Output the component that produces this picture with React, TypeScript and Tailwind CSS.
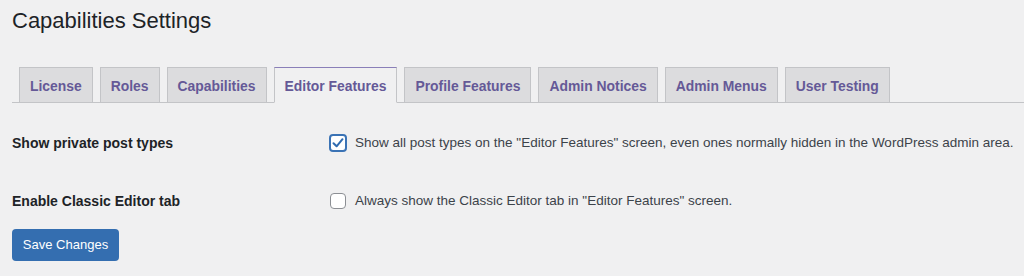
import React from "react";

const tabs = [
  "License",
  "Roles",
  "Capabilities",
  "Editor Features",
  "Profile Features",
  "Admin Notices",
  "Admin Menus",
  "User Testing",
];

function Checkbox({ checked }: { checked: boolean }) {
  return checked ? (
    <span className="flex h-[18px] w-[18px] shrink-0 items-center justify-center rounded-[4px] border-2 border-[#3b73b5] bg-white">
      <svg width="14" height="14" viewBox="0 0 14 14" fill="none">
        <path d="M2.5 7.2 L5.6 10.3 L11.5 3.2" stroke="#2f6bb0" strokeWidth="2" strokeLinecap="round" strokeLinejoin="round" />
      </svg>
    </span>
  ) : (
    <span className="block h-[16px] w-[16px] shrink-0 rounded-[4px] border border-[#8c8f94] bg-white" />
  );
}

export default function App() {
  return (
    <div
      className="h-[276px] w-[1024px] overflow-hidden bg-[#f0f0f1] pl-[12px]"
      style={{ fontFamily: '"Liberation Sans", Arial, sans-serif' }}
    >
      <h1 className="pt-[6px] text-[22px] leading-[30px] font-normal text-[#1d2327]">
        Capabilities Settings
      </h1>
      <div className="mt-[31px] flex items-end gap-[7px] border-b border-[#c3c4c7] pl-[7px]">
        {tabs.map((t) => {
          const active = t === "Editor Features";
          return (
            <div
              key={t}
              className={
                active
                  ? "-mb-px border border-[#c3c4c7] border-t-[#8a7fb8] border-b-[#f0f0f1] bg-[#f0f0f1] px-[10px] pt-[6px] pb-[4px] text-[13.9px] leading-[24px] font-bold text-[#655997]"
                  : "border border-b-0 border-[#c3c4c7] bg-[#dcdcde] px-[10px] pt-[6px] pb-[4px] text-[13.9px] leading-[24px] font-bold text-[#655997]"
              }
            >
              {t}
            </div>
          );
        })}
      </div>
      <div className="grid grid-cols-[317px_1fr] text-[#1d2327]">
        <div className="pt-[30px] text-[14px] leading-[20px] font-bold">Show private post types</div>
        <div className="flex items-center gap-[8px] pt-[30px] text-[13.5px] leading-[20px] text-[#3c434a]">
          <Checkbox checked />
          <span>
            Show all post types on the "Editor Features" screen, even ones normally hidden in the WordPress admin area.
          </span>
        </div>
        <div className="pt-[38px] text-[14px] leading-[20px] font-bold">Enable Classic Editor tab</div>
        <div className="flex items-center gap-[8px] pt-[38px] pl-[1px] text-[13.5px] leading-[20px] text-[#3c434a]">
          <Checkbox checked={false} />
          <span className="pl-[1px]">Always show the Classic Editor tab in "Editor Features" screen.</span>
        </div>
      </div>
      <button className="mt-[18px] h-[32px] w-[107px] rounded-[4px] bg-[#346eb0] text-[13px] text-white">
        Save Changes
      </button>
    </div>
  );
}
